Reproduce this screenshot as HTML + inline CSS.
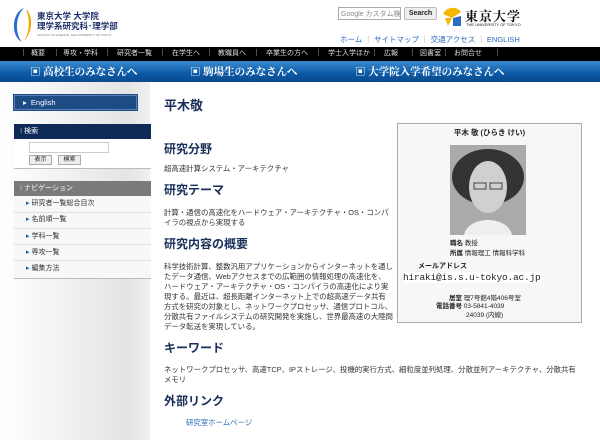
<!DOCTYPE html>
<html><head><meta charset="utf-8"><style>
*{margin:0;padding:0;box-sizing:border-box}
body{width:600px;height:440px;overflow:hidden;background:#fff;font-family:"Liberation Sans","Noto Sans CJK JP",sans-serif;position:relative;color:#222}
.a{position:absolute;white-space:nowrap}
.h{position:absolute;font-size:12px;font-weight:bold;color:#1a2f5a;white-space:nowrap}
.t{position:absolute;font-size:7.4px;line-height:10px;color:#333}
.nav span{position:absolute;top:0}
</style></head><body>
<svg class="a" style="left:10px;top:6px" width="26" height="38" viewBox="0 0 26 38"><path d="M14 2 C2 6 0 30 12 36 C5 28 5 10 14 2Z" fill="#2b6cc4"/><path d="M16 3 C24 10 22 28 14 35 C20 26 20 12 16 3Z" fill="#f0a800"/></svg>
<div class="a" style="left:37px;top:11px;font-size:8.5px;font-weight:bold;color:#1d2f6a;line-height:10px">東京大学 大学院<br>理学系研究科･理学部</div>
<div class="a" style="left:37px;top:33px;font-size:3px;color:#777">SCHOOL OF SCIENCE, THE UNIVERSITY OF TOKYO</div>
<div class="a" style="left:338px;top:7px;width:63px;height:13px;border:1px solid #aaa;font-size:7px;color:#888;padding:1px 2px;overflow:hidden">Google カスタム検索</div>
<div class="a" style="left:404px;top:7px;width:33px;height:13px;border:1px solid #bbb;border-radius:2px;background:#eee;font-size:7px;font-weight:bold;text-align:center;line-height:11px">Search</div>
<svg class="a" style="left:441px;top:6px" width="22" height="22" viewBox="0 0 22 22"><path d="M2 8 C6 0 16 0 20 6 L11 12Z" fill="#f5b800"/><path d="M4 12 L11 12 L7 20Z" fill="#f5b800"/><path d="M12 12 L20 10 L20 20 L12 20Z" fill="#2b6cc4"/></svg>
<div class="a" style="left:465px;top:6px;font-size:13px;font-weight:bold;color:#111;font-family:'Noto Serif CJK SC',serif;letter-spacing:1px">東京大学</div>
<div class="a" style="left:466px;top:22px;font-size:4px;color:#111">THE UNIVERSITY OF TOKYO</div>
<div class="a" style="left:340px;top:34px;font-size:7.5px;color:#2a6ab8">ホーム <span style="color:#999">｜</span> サイトマップ <span style="color:#999">｜</span> 交通アクセス <span style="color:#999">｜</span> ENGLISH</div>
<div class="a nav" style="left:0;top:47px;width:600px;height:14px;background:#000;color:#ddd;font-size:7px;line-height:14px">
<span style="left:20px">｜</span><span style="left:31px">概要</span><span style="left:53px">｜</span><span style="left:63px">専攻・学科</span><span style="left:104px">｜</span><span style="left:117px">研究者一覧</span><span style="left:159px">｜</span><span style="left:172px">在学生へ</span><span style="left:206px">｜</span><span style="left:218px">教職員へ</span><span style="left:253px">｜</span><span style="left:266px">卒業生の方へ</span><span style="left:315px">｜</span><span style="left:328px">学士入学ほか</span><span style="left:371px">｜</span><span style="left:384px">広報</span><span style="left:409px">｜</span><span style="left:420px">図書室</span><span style="left:442px">｜</span><span style="left:454px">お問合せ</span><span style="left:494px">｜</span></div>
<div class="a" style="left:0;top:61px;width:600px;height:21px;background:linear-gradient(#3a8ad0,#0c5aa6 60%,#094a8c);color:#fff;font-family:'Noto Serif CJK SC',serif;font-size:10.5px;font-weight:bold;line-height:21px">
<span class="a" style="left:30px">▣ 高校生のみなさんへ</span><span class="a" style="left:190px">▣ 駒場生のみなさんへ</span><span class="a" style="left:355px">▣ 大学院入学希望のみなさんへ</span></div>
<div class="a" style="left:0;top:82px;width:150px;height:358px;background:linear-gradient(90deg,#fff,#e4e4e4 85%,#f0f0f0)"></div>
<div class="a" style="left:14px;top:95px;width:123px;height:15px;background:#1d4b84;border:1px solid #5a7fb0;outline:1px solid #1d4b84;color:#fff;font-size:7.5px;line-height:13px;padding-left:8px">▸ &nbsp;English</div>
<div class="a" style="left:14px;top:124px;width:137px;height:45px;background:#fff;border-bottom:1px solid #bbb"></div>
<div class="a" style="left:14px;top:124px;width:137px;height:15px;background:#0d2a58;color:#fff;font-size:7px;line-height:15px;padding-left:6px">⁝ 検索</div>
<div class="a" style="left:29px;top:142px;width:80px;height:11px;border:1px solid #ccc"></div>
<div class="a" style="left:29px;top:155px;width:23px;height:10px;border:1px solid #aaa;background:#eee;font-size:6px;text-align:center;line-height:8px">表示</div>
<div class="a" style="left:58px;top:155px;width:23px;height:10px;border:1px solid #aaa;background:#eee;font-size:6px;text-align:center;line-height:8px">検索</div>
<div class="a" style="left:14px;top:181px;width:137px;height:98px;background:#f8f8f8;border-bottom:1px solid #bbb"></div>
<div class="a" style="left:14px;top:181px;width:137px;height:15px;background:#7a7a7a;color:#fff;font-size:7px;line-height:15px;padding-left:6px">⁝ ナビゲーション</div>
<div class="a" style="left:26px;top:196px;font-size:7px;line-height:16.3px;color:#333"><span style="color:#1d5ea8">▸</span> 研究者一覧総合目次<br><span style="color:#1d5ea8">▸</span> 名前順一覧<br><span style="color:#1d5ea8">▸</span> 学科一覧<br><span style="color:#1d5ea8">▸</span> 専攻一覧<br><span style="color:#1d5ea8">▸</span> 編集方法</div>
<div class="a" style="left:14px;top:212px;width:137px;border-top:1px solid #e0e0e0;height:49px;border-bottom:1px solid #e0e0e0"></div>
<div class="a" style="left:14px;top:228px;width:137px;border-top:1px solid #e0e0e0;height:17px;border-bottom:1px solid #e0e0e0"></div>
<div class="h" style="left:164px;top:95px;font-size:13px">平木敬</div>
<div class="h" style="left:164px;top:140px">研究分野</div>
<div class="t" style="left:164px;top:164px">超高速計算システム・アーキテクチャ</div>
<div class="h" style="left:164px;top:181px">研究テーマ</div>
<div class="t" style="left:164px;top:208px;width:230px">計算・通信の高速化をハードウェア・アーキテクチャ・OS・コンパイラの視点から実現する</div>
<div class="h" style="left:164px;top:235px">研究内容の概要</div>
<div class="t" style="left:164px;top:262px;width:229px">科学技術計算、整数汎用アプリケーションからインターネットを通したデータ通信、Webアクセスまでの広範囲の情報処理の高速化を、ハードウェア・アーキテクチャ・OS・コンパイラの高速化により実現する。最近は、超長距離インターネット上での超高速データ共有方式を研究の対象とし、ネットワークプロセッサ、通信プロトコル、分散共有ファイルシステムの研究開発を実施し、世界最高速の大陸間データ転送を実現している。</div>
<div class="h" style="left:164px;top:339px">キーワード</div>
<div class="t" style="left:164px;top:365px;width:420px">ネットワークプロセッサ、高速TCP、IPストレージ、投機的実行方式、細粒度並列処理、分散並列アーキテクチャ、分散共有<br>メモリ</div>
<div class="h" style="left:164px;top:392px">外部リンク</div>
<div class="t" style="left:186px;top:418px;color:#2a6ab8">研究室ホームページ</div>
<div class="a" style="left:397px;top:123px;width:185px;height:200px;background:#f7f7f7;border:1px solid #aaa"></div>
<div class="a" style="left:397px;top:127px;width:185px;text-align:center;font-size:7.5px;font-weight:bold">平木 敬 (ひらき けい)</div>
<svg class="a" style="left:450px;top:145px" width="76" height="90" viewBox="0 0 76 90"><rect width="76" height="90" fill="#aaa"/><ellipse cx="38" cy="32" rx="36" ry="28" fill="#333"/><ellipse cx="38" cy="42" rx="19" ry="26" fill="#d0d0d0"/><path d="M14 90 C18 70 58 70 62 90Z" fill="#eee"/><rect x="24" y="38" width="12" height="6" fill="none" stroke="#444"/><rect x="40" y="38" width="12" height="6" fill="none" stroke="#444"/></svg>
<div class="a" style="left:450px;top:239px;font-size:6.5px;line-height:10px"><b>職名</b> 教授<br><b>所属</b> 情報理工 情報科学科</div>
<div class="a" style="left:418px;top:261px;font-size:7px;font-weight:bold">メールアドレス</div>
<div class="a" style="left:403px;top:272px;font-size:9.5px;font-family:'Liberation Mono',monospace;background:#fff;letter-spacing:-0.2px">hiraki@is.s.u-tokyo.ac.jp</div>
<div class="a" style="left:449px;top:292px;font-size:6.5px"><b>居室</b> 理7号館4階406号室</div>
<div class="a" style="left:436px;top:302px;font-size:6.5px;line-height:9px"><b>電話番号</b> 03-5841-4039<br><span style="padding-left:30px">24039 (内線)</span></div>
</body></html>
